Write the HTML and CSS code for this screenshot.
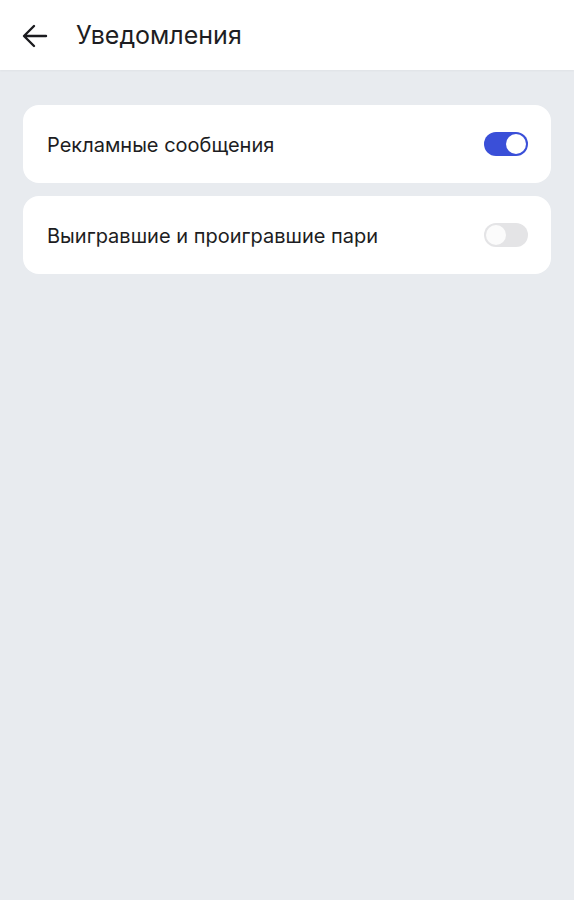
FILE: index.html
```html
<!DOCTYPE html>
<html lang="ru">
<head>
<meta charset="utf-8">
<link rel="stylesheet" href="styles.css">
</head>
<body>
<header class="topbar">
  <svg class="back" width="26" height="24" viewBox="0 0 26 24" fill="none" stroke="#1b1b1f" stroke-width="2.4" stroke-linecap="round" stroke-linejoin="round"><path d="M24 12H2.5M12 2L2 12l10 10"/></svg>
  <h1 class="title">Уведомления</h1>
</header>
<main class="content">
  <div class="card">
    <span class="label">Рекламные сообщения</span>
    <span class="toggle on"><span class="knob"></span></span>
  </div>
  <div class="card">
    <span class="label">Выигравшие и проигравшие пари</span>
    <span class="toggle"><span class="knob"></span></span>
  </div>
</main>
</body>
</html>
```
FILE: styles.css
```css
html, body { margin: 0; padding: 0; }
body {
  background: #e8ebef;
  font-family: Inter, "Noto Sans", sans-serif;
  color: #1d1d22;
  min-height: 900px;
}
.topbar {
  height: 70px;
  background: #fff;
  display: flex;
  align-items: center;
  padding: 0 0 0 22px;
  gap: 28px;
  box-sizing: border-box;
  box-shadow: 0 1px 2px rgba(0,0,0,0.04);
}
.back { display: block; margin-top: 1px; }
.title {
  margin: 0;
  font-size: 25px;
  font-weight: 400;
}
.content {
  padding: 35px 23px 0 23px;
  display: flex;
  flex-direction: column;
  gap: 13px;
}
.card {
  background: #fff;
  border-radius: 16px;
  height: 78px;
  display: flex;
  align-items: center;
  justify-content: space-between;
  padding: 0 23px 0 24px;
}
.label { font-size: 20px; margin-top: 1px; }
.toggle {
  width: 44px;
  height: 24px;
  border-radius: 12px;
  background: #e4e4e6;
  position: relative;
  display: block;
}
.toggle .knob {
  position: absolute;
  top: 2px;
  left: 2px;
  width: 20px;
  height: 20px;
  border-radius: 50%;
  background: #fbfbfb;
}
.toggle.on { background: #3a4fd8; }
.toggle.on .knob { left: 22px; background: #fff; }
```
